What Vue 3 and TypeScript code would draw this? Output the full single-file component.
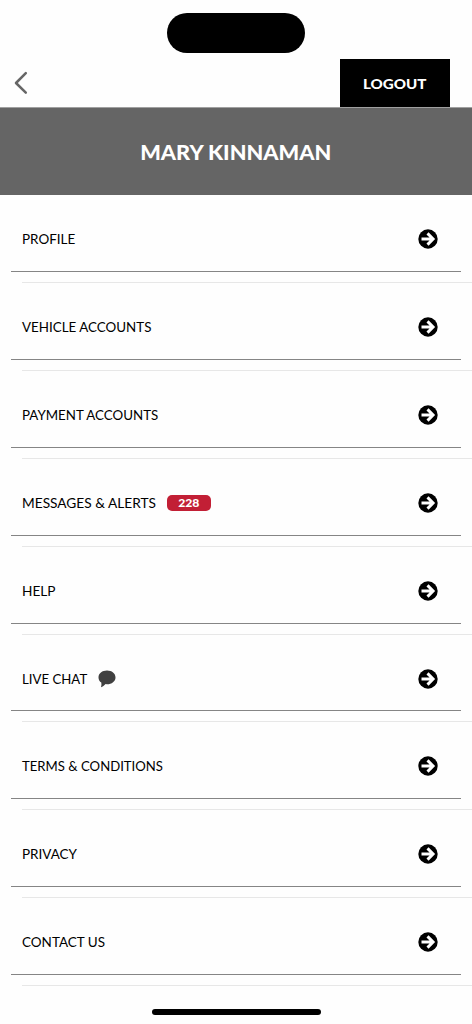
<script setup lang="ts">
interface MenuItem {
  label: string
  width: number
  badge?: string
  chat?: boolean
}

const items: MenuItem[] = [
  { label: 'PROFILE', width: 53.2 },
  { label: 'VEHICLE ACCOUNTS', width: 129.4 },
  { label: 'PAYMENT ACCOUNTS', width: 136.2 },
  { label: 'MESSAGES & ALERTS', width: 134 },
  { label: 'HELP', width: 33.5 },
  { label: 'LIVE CHAT', width: 65.2, chat: true },
  { label: 'TERMS & CONDITIONS', width: 141 },
  { label: 'PRIVACY', width: 55 },
  { label: 'CONTACT US', width: 83 },
]
items[3].badge = '228'
</script>

<template>
  <main class="screen">
    <header class="top">
      <div class="island"></div>
      <div class="nav">
        <svg class="back" viewBox="0 0 16 24" aria-label="Back">
          <path d="M12.800 2.200 3 12l9.800 9.600" />
        </svg>
        <button class="logout" type="button">
          <svg width="110" height="48">
            <text x="22.900" y="30.400" textLength="63.500" lengthAdjust="spacingAndGlyphs">LOGOUT</text>
          </svg>
        </button>
      </div>
    </header>

    <h1 class="name">
      <svg width="472" height="88">
        <text x="140.200" y="52.300" textLength="191" lengthAdjust="spacingAndGlyphs">MARY KINNAMAN</text>
      </svg>
    </h1>

    <ul class="menu">
      <li v-for="item in items" :key="item.label" class="row">
        <div class="content">
          <svg class="label" :width="item.width" height="20">
            <text x="0" y="14.700" :textLength="item.width" lengthAdjust="spacingAndGlyphs">{{ item.label }}</text>
          </svg>
          <span v-if="item.badge" class="badge">
            <svg width="44" height="16">
              <text x="11.200" y="12.100" textLength="21.200" lengthAdjust="spacingAndGlyphs">{{ item.badge }}</text>
            </svg>
          </span>
          <svg v-if="item.chat" class="chat" viewBox="0 0 18 18">
            <path d="M9 .6c4.800 0 8.500 2.900 8.500 6.800S13.800 14.200 9 14.200L7.600 14.100C6.200 15.600 4.700 16.700 3 17.300c.5-1.500.6-3.200.3-4.700C1.600 11.300.5 9.500.5 7.400.5 3.500 4.200.6 9 .6Z" />
          </svg>
          <svg class="arrow" viewBox="0 0 20 20">
            <circle cx="10" cy="10" r="9.700" />
            <path d="M3.500 10H15M9.500 4.400 15.100 10l-5.600 5.600" />
          </svg>
        </div>
      </li>
    </ul>

    <div class="home"></div>
  </main>
</template>

<style>
body {
  margin: 0;
  background: #fefefe;
}
</style>

<style scoped>
.screen {
  box-sizing: border-box;
  width: 472px;
  height: 1024px;
  overflow: hidden;
  background: #fefefe;
  font-family: Lato, "Open Sans", sans-serif;
}
svg {
  display: block;
  overflow: visible;
}
.top {
  box-sizing: border-box;
  height: 108px;
  border-bottom: 1px solid #a0a0a0;
  display: flex;
  flex-direction: column;
}
.island {
  flex: none;
  width: 138px;
  height: 40.300px;
  margin: 12.500px auto 0 167px;
  border-radius: 21px;
  background: #000;
}
.nav {
  display: flex;
  justify-content: space-between;
  margin-top: 6.200px;
  padding: 0 22px 0 13px;
}
.back {
  width: 16px;
  height: 24px;
  margin-top: 12.300px;
  fill: none;
  stroke: #666;
  stroke-width: 2.500;
  stroke-linecap: round;
  stroke-linejoin: round;
}
.logout {
  width: 110px;
  height: 48.500px;
  padding: 0;
  border: 0;
  background: #000;
  color: #fff;
  font: 900 14px Lato, sans-serif;
}
.logout svg {
  height: 48.500px;
}
.logout text,
.name text,
.badge text {
  fill: #fff;
}
.name {
  height: 87.400px;
  margin: 0;
  background: #656565;
  font-size: 20.500px;
  font-weight: 900;
}
.menu {
  list-style: none;
  margin: 0;
  padding: 0;
}
.row {
  height: 87.850px;
  background: linear-gradient(#e7e7e7, #e7e7e7) 22px 100% / 450px 1px no-repeat;
}
.content {
  box-sizing: border-box;
  display: flex;
  align-items: center;
  height: 76.800px;
  margin: 0 11px;
  padding: 12px 23px 0 11px;
  border-bottom: 1px solid #858585;
}
.label {
  font-size: 12.900px;
}
.label text {
  fill: #000;
}
.badge {
  width: 44px;
  height: 16px;
  margin-left: 11px;
  border-radius: 5px;
  background: #c21f35;
  font-size: 11px;
  font-weight: 900;
}
.chat {
  width: 18px;
  height: 18px;
  margin-left: 10.800px;
  fill: #404040;
}
.arrow {
  width: 20px;
  height: 20px;
  margin-left: auto;
}
.arrow path {
  fill: none;
  stroke: #fff;
  stroke-width: 2.900;
}
.home {
  width: 169px;
  height: 5.600px;
  margin: 23.300px auto 0 151.500px;
  border-radius: 3px;
  background: #000;
}
</style>
